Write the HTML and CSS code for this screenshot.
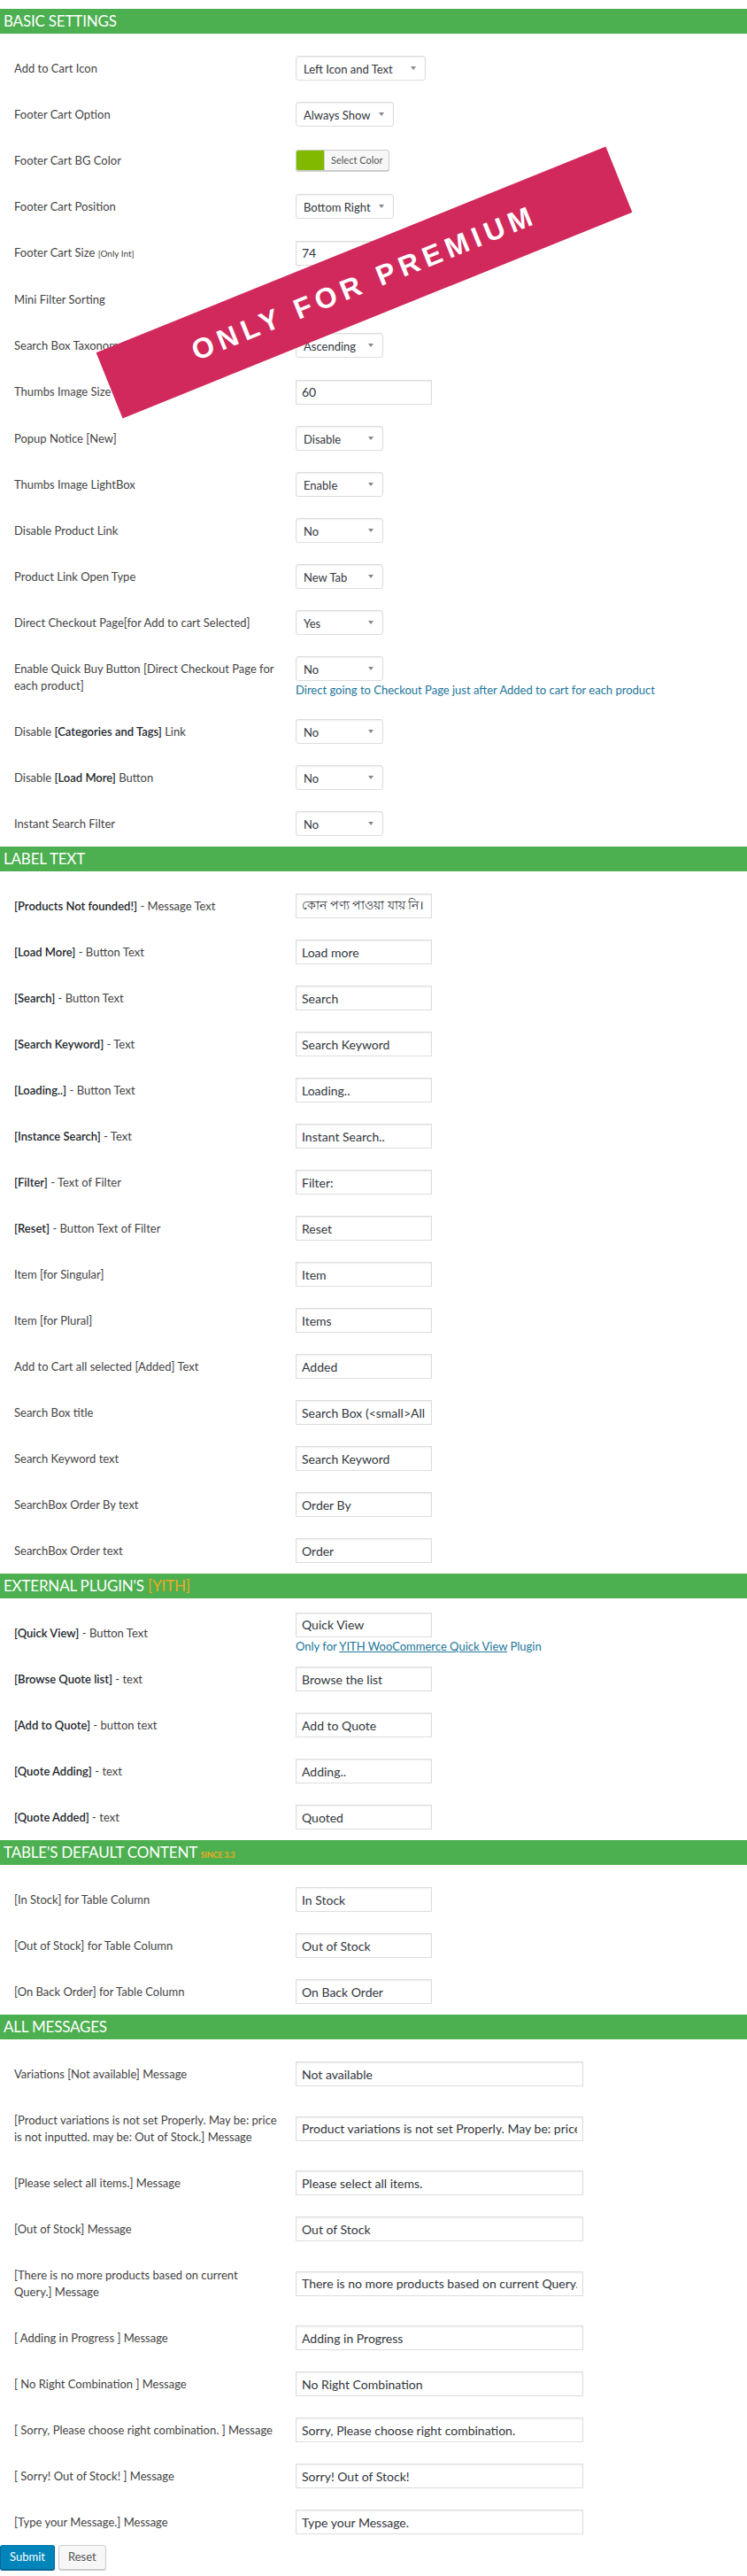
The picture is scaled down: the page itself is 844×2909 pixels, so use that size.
FILE: index.html
```html
<!DOCTYPE html>
<html lang="en">
<head>
<meta charset="UTF-8">
<title>Product Table Settings</title>
<meta name="viewport" content="width=device-width, initial-scale=1.0">
<link rel="stylesheet" href="styles.css">
</head>
<body>
<form class="page" onsubmit="return false;">

<!-- Basic Settings -->
<h2 class="section-title">Basic Settings</h2>
<div class="row">
    <div class="row-label">Add to Cart Icon</div>
    <div class="row-field"><span class="select-wrap select-wide"><select><option>Left Icon and Text</option></select></span></div>
</div>
<div class="row">
    <div class="row-label">Footer Cart Option</div>
    <div class="row-field"><span class="select-wrap select-mid"><select><option>Always Show</option></select></span></div>
</div>
<div class="row">
    <div class="row-label">Footer Cart BG Color</div>
    <div class="row-field">
        <button type="button" class="color-btn"><span class="color-swatch"></span><span class="color-text">Select Color</span></button>
    </div>
</div>
<div class="row">
    <div class="row-label">Footer Cart Position</div>
    <div class="row-field"><span class="select-wrap select-mid"><select><option>Bottom Right</option></select></span></div>
</div>
<div class="row">
    <div class="row-label">Footer Cart Size <small>[Only Int]</small></div>
    <div class="row-field"><input type="text" class="text-input" value="74"></div>
</div>
<div class="row">
    <div class="row-label">Mini Filter Sorting</div>
    <div class="row-field"><span class="select-wrap"><select><option>Ascending</option></select></span></div>
</div>
<div class="row">
    <div class="row-label">Search Box Taxonomy Sorting</div>
    <div class="row-field"><span class="select-wrap"><select><option>Ascending</option></select></span></div>
</div>
<div class="row">
    <div class="row-label">Thumbs Image Size <small>[Only Int]</small></div>
    <div class="row-field"><input type="text" class="text-input" value="60"></div>
</div>
<div class="row">
    <div class="row-label">Popup Notice [New]</div>
    <div class="row-field"><span class="select-wrap"><select><option>Disable</option></select></span></div>
</div>
<div class="row">
    <div class="row-label">Thumbs Image LightBox</div>
    <div class="row-field"><span class="select-wrap"><select><option>Enable</option></select></span></div>
</div>
<div class="row">
    <div class="row-label">Disable Product Link</div>
    <div class="row-field"><span class="select-wrap"><select><option>No</option></select></span></div>
</div>
<div class="row">
    <div class="row-label">Product Link Open Type</div>
    <div class="row-field"><span class="select-wrap"><select><option>New Tab</option></select></span></div>
</div>
<div class="row">
    <div class="row-label">Direct Checkout Page[for Add to cart Selected]</div>
    <div class="row-field"><span class="select-wrap"><select><option>Yes</option></select></span></div>
</div>
<div class="row">
    <div class="row-label">Enable Quick Buy Button [Direct Checkout Page for<br>each product]</div>
    <div class="row-field">
        <span class="select-wrap"><select><option>No</option></select></span>
        <p class="field-note">Direct going to Checkout Page just after Added to cart for each product</p>
    </div>
</div>
<div class="row">
    <div class="row-label">Disable <b>[Categories and Tags]</b> Link</div>
    <div class="row-field"><span class="select-wrap"><select><option>No</option></select></span></div>
</div>
<div class="row">
    <div class="row-label">Disable <b>[Load More]</b> Button</div>
    <div class="row-field"><span class="select-wrap"><select><option>No</option></select></span></div>
</div>
<div class="row">
    <div class="row-label">Instant Search Filter</div>
    <div class="row-field"><span class="select-wrap"><select><option>No</option></select></span></div>
</div>

<!-- Label Text -->
<h2 class="section-title">Label Text</h2>
<div class="row">
    <div class="row-label"><b>[Products Not founded!]</b> - Message Text</div>
    <div class="row-field"><input type="text" class="text-input" value="কোন পণ্য পাওয়া যায় নি।"></div>
</div>
<div class="row">
    <div class="row-label"><b>[Load More]</b> - Button Text</div>
    <div class="row-field"><input type="text" class="text-input" value="Load more"></div>
</div>
<div class="row">
    <div class="row-label"><b>[Search]</b> - Button Text</div>
    <div class="row-field"><input type="text" class="text-input" value="Search"></div>
</div>
<div class="row">
    <div class="row-label"><b>[Search Keyword]</b> - Text</div>
    <div class="row-field"><input type="text" class="text-input" value="Search Keyword"></div>
</div>
<div class="row">
    <div class="row-label"><b>[Loading..]</b> - Button Text</div>
    <div class="row-field"><input type="text" class="text-input" value="Loading.."></div>
</div>
<div class="row">
    <div class="row-label"><b>[Instance Search]</b> - Text</div>
    <div class="row-field"><input type="text" class="text-input" value="Instant Search.."></div>
</div>
<div class="row">
    <div class="row-label"><b>[Filter]</b> - Text of Filter</div>
    <div class="row-field"><input type="text" class="text-input" value="Filter:"></div>
</div>
<div class="row">
    <div class="row-label"><b>[Reset]</b> - Button Text of Filter</div>
    <div class="row-field"><input type="text" class="text-input" value="Reset"></div>
</div>
<div class="row">
    <div class="row-label">Item [for Singular]</div>
    <div class="row-field"><input type="text" class="text-input" value="Item"></div>
</div>
<div class="row">
    <div class="row-label">Item [for Plural]</div>
    <div class="row-field"><input type="text" class="text-input" value="Items"></div>
</div>
<div class="row">
    <div class="row-label">Add to Cart all selected [Added] Text</div>
    <div class="row-field"><input type="text" class="text-input" value="Added"></div>
</div>
<div class="row">
    <div class="row-label">Search Box title</div>
    <div class="row-field"><input type="text" class="text-input" value="Search Box (&lt;small&gt;All Fields Optional&lt;/small&gt;)"></div>
</div>
<div class="row">
    <div class="row-label">Search Keyword text</div>
    <div class="row-field"><input type="text" class="text-input" value="Search Keyword"></div>
</div>
<div class="row">
    <div class="row-label">SearchBox Order By text</div>
    <div class="row-field"><input type="text" class="text-input" value="Order By"></div>
</div>
<div class="row">
    <div class="row-label">SearchBox Order text</div>
    <div class="row-field"><input type="text" class="text-input" value="Order"></div>
</div>

<!-- External plugins -->
<h2 class="section-title">External Plugin's <span class="title-accent">[YITH]</span></h2>
<div class="row">
    <div class="row-label"><b>[Quick View]</b> - Button Text</div>
    <div class="row-field">
        <input type="text" class="text-input" value="Quick View">
        <p class="field-note">Only for <a href="#">YITH WooCommerce Quick View</a> Plugin</p>
    </div>
</div>
<div class="row">
    <div class="row-label"><b>[Browse Quote list]</b> - text</div>
    <div class="row-field"><input type="text" class="text-input" value="Browse the list"></div>
</div>
<div class="row">
    <div class="row-label"><b>[Add to Quote]</b> - button text</div>
    <div class="row-field"><input type="text" class="text-input" value="Add to Quote"></div>
</div>
<div class="row">
    <div class="row-label"><b>[Quote Adding]</b> - text</div>
    <div class="row-field"><input type="text" class="text-input" value="Adding.."></div>
</div>
<div class="row">
    <div class="row-label"><b>[Quote Added]</b> - text</div>
    <div class="row-field"><input type="text" class="text-input" value="Quoted"></div>
</div>

<!-- Table default content -->
<h2 class="section-title">Table's Default Content <small class="title-accent">since 3.3</small></h2>
<div class="row">
    <div class="row-label">[In Stock] for Table Column</div>
    <div class="row-field"><input type="text" class="text-input" value="In Stock"></div>
</div>
<div class="row">
    <div class="row-label">[Out of Stock] for Table Column</div>
    <div class="row-field"><input type="text" class="text-input" value="Out of Stock"></div>
</div>
<div class="row">
    <div class="row-label">[On Back Order] for Table Column</div>
    <div class="row-field"><input type="text" class="text-input" value="On Back Order"></div>
</div>

<!-- Messages -->
<h2 class="section-title">All Messages</h2>
<div class="row">
    <div class="row-label">Variations [Not available] Message</div>
    <div class="row-field"><input type="text" class="text-input input-long" value="Not available"></div>
</div>
<div class="row">
    <div class="row-label">[Product variations is not set Properly. May be: price<br>is not inputted. may be: Out of Stock.] Message</div>
    <div class="row-field"><input type="text" class="text-input input-long" value="Product variations is not set Properly. May be: price is not inputted. may be: Out of Stock."></div>
</div>
<div class="row">
    <div class="row-label">[Please select all items.] Message</div>
    <div class="row-field"><input type="text" class="text-input input-long" value="Please select all items."></div>
</div>
<div class="row">
    <div class="row-label">[Out of Stock] Message</div>
    <div class="row-field"><input type="text" class="text-input input-long" value="Out of Stock"></div>
</div>
<div class="row">
    <div class="row-label">[There is no more products based on current<br>Query.] Message</div>
    <div class="row-field"><input type="text" class="text-input input-long" value="There is no more products based on current Query."></div>
</div>
<div class="row">
    <div class="row-label">[ Adding in Progress ] Message</div>
    <div class="row-field"><input type="text" class="text-input input-long" value="Adding in Progress"></div>
</div>
<div class="row">
    <div class="row-label">[ No Right Combination ] Message</div>
    <div class="row-field"><input type="text" class="text-input input-long" value="No Right Combination"></div>
</div>
<div class="row">
    <div class="row-label">[ Sorry, Please choose right combination. ] Message</div>
    <div class="row-field"><input type="text" class="text-input input-long" value="Sorry, Please choose right combination."></div>
</div>
<div class="row">
    <div class="row-label">[ Sorry! Out of Stock! ] Message</div>
    <div class="row-field"><input type="text" class="text-input input-long" value="Sorry! Out of Stock!"></div>
</div>
<div class="row">
    <div class="row-label">[Type your Message.] Message</div>
    <div class="row-field"><input type="text" class="text-input input-long" value="Type your Message."></div>
</div>

<div class="actions">
    <button type="submit" class="btn btn-primary">Submit</button>
    <button type="reset" class="btn">Reset</button>
</div>

<div class="premium-ribbon">ONLY FOR PREMIUM</div>
</form>
</body>
</html>
```

FILE: styles.css
```css
body {
    margin: 0;
    padding: 0 0 10px;
    background: #fff;
    color: #444;
    font-family: Lato, "Noto Sans", "Liberation Sans", sans-serif;
    font-size: 13px;
    line-height: 19px;
}
.page {
    position: relative;
    margin: 0;
    padding-top: 10px;
}
.section-title {
    margin: 0 0 13px;
    height: 28px;
    padding: 0 4px;
    background: #4caf50;
    color: #fff;
    font-size: 17px;
    font-weight: normal;
    line-height: 28px;
    text-transform: uppercase;
    letter-spacing: -0.2px;
}
.title-accent {
    color: #f3a81c;
}
small.title-accent {
    font-size: 9px;
    font-weight: bold;
}
.row {
    display: flex;
    align-items: center;
}
.row-label {
    flex: 0 0 334px;
    box-sizing: border-box;
    padding: 16.5px 0 16.5px 16px;
}
.row-label b {
    font-weight: 600;
    color: #23282d;
}
.row-label small {
    font-size: 10px;
}
.row-field {
    padding: 2px 0;
}
.text-input {
    display: block;
    box-sizing: border-box;
    width: 154px;
    height: 28px;
    margin: 0;
    padding: 3px 6px;
    border: 1px solid #ddd;
    box-shadow: inset 0 1px 2px rgba(0,0,0,0.07);
    background: #fff;
    color: #32373c;
    font-family: Lato, "Noto Sans", "Liberation Sans", sans-serif;
    font-size: 14px;
    outline: none;
}
.input-long {
    width: 325px;
}
.select-wrap {
    position: relative;
    display: block;
    width: 99px;
}
.select-wrap.select-mid { width: 111px; }
.select-wrap.select-wide { width: 147px; }
.select-wrap::after {
    content: "";
    position: absolute;
    right: 11px;
    top: 12px;
    border-left: 3px solid transparent;
    border-right: 3px solid transparent;
    border-top: 4px solid #888;
}
.select-wrap select {
    -webkit-appearance: none;
    appearance: none;
    width: 100%;
    height: 28px;
    margin: 0;
    padding: 2px 20px 0 8px;
    border: 1px solid #ddd;
    border-radius: 3px;
    box-shadow: inset 0 1px 2px rgba(0,0,0,0.07);
    background: #fff;
    color: #32373c;
    font-family: Lato, "Noto Sans", "Liberation Sans", sans-serif;
    font-size: 13px;
    outline: none;
}
.color-btn {
    display: flex;
    height: 24px;
    margin: 0;
    padding: 0;
    border: 1px solid #ccc;
    border-radius: 3px;
    background: #f7f7f7;
    box-shadow: 0 1px 0 #ccc;
    overflow: hidden;
    cursor: pointer;
}
.color-swatch {
    width: 31px;
    height: 100%;
    background: #81b900;
    border-right: 1px solid #ccc;
}
.color-text {
    padding: 0 7px;
    line-height: 22px;
    color: #555;
    font-family: Lato, "Noto Sans", "Liberation Sans", sans-serif;
    font-size: 11px;
}
.field-note {
    margin: 2px 0 0;
    color: #21759b;
    font-size: 13px;
    line-height: 17px;
}
.field-note a {
    color: #21759b;
}
.actions {
    display: flex;
    gap: 4px;
}
.btn {
    height: 28px;
    padding: 0 10px 2px;
    border: 1px solid #ccc;
    border-radius: 3px;
    background: #f7f7f7;
    box-shadow: 0 1px 0 #ccc;
    color: #555;
    font-family: Lato, "Noto Sans", "Liberation Sans", sans-serif;
    font-size: 13px;
    cursor: pointer;
}
.btn-primary {
    background: #0085ba;
    border-color: #0073aa #006799 #006799;
    box-shadow: 0 1px 0 #006799;
    color: #fff;
}
.premium-ribbon {
    position: absolute;
    left: 101px;
    top: 279px;
    width: 621px;
    height: 80px;
    background: #d1295b;
    color: #fff;
    font-family: "Liberation Sans", Arial, sans-serif;
    font-size: 32px;
    font-weight: bold;
    letter-spacing: 6px;
    line-height: 80px;
    text-align: center;
    transform: rotate(-22deg);
}
```
